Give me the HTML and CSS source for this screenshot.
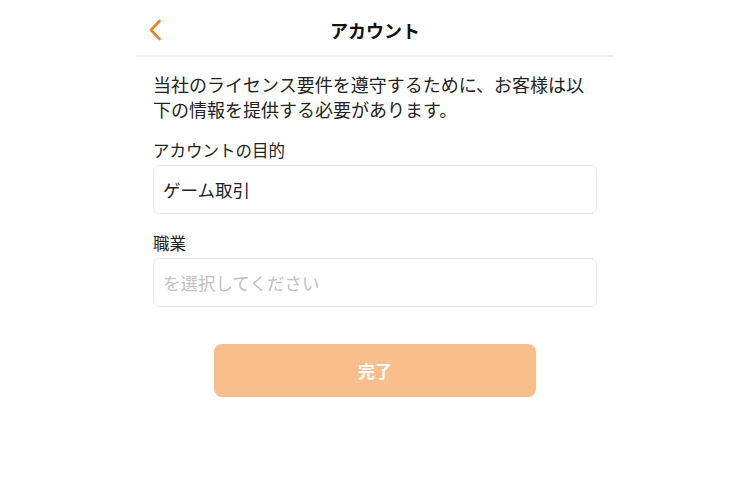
FILE: index.html
```html
<!DOCTYPE html>
<html lang="ja">
<head>
    <meta charset="UTF-8">
    <meta name="viewport" content="width=device-width, initial-scale=1.0">
    <title>アカウント</title>
    <link rel="stylesheet" href="styles.css">
</head>
<body>
    <div id="page">
        <div class="top-bar">
            <a class="back">
                <svg width="14" height="22" viewBox="0 0 14 22">
                    <path d="M11.5 2 L3 11 L11.5 20" fill="none" stroke="#f0832a" stroke-width="2.6" stroke-linecap="round" stroke-linejoin="round"/>
                </svg>
            </a>
            <p class="title">アカウント</p>
        </div>
        <div class="form-body">
            <p class="notice">当社のライセンス要件を遵守するために、お客様は以下の情報を提供する必要があります。</p>
            <div class="field">
                <p class="label">アカウントの目的</p>
                <div class="input">ゲーム取引</div>
            </div>
            <div class="field">
                <p class="label">職業</p>
                <div class="input placeholder">を選択してください</div>
            </div>
            <div class="actions">
                <a class="submit">完了</a>
            </div>
        </div>
    </div>
</body>
</html>
```

FILE: styles.css
```css
*{
    padding: 0;
    margin: 0;
    box-sizing: border-box;
    font-family: "Noto Sans CJK JP", "Noto Sans", sans-serif;
}
body{
    background: white;
    color: #222;
}
a{
    text-decoration: none;
    cursor: pointer;
}
#page{
    width: 478px;
    margin: 0 auto;
}
#page > .top-bar{
    position: relative;
    display: flex;
    align-items: center;
    justify-content: center;
    height: 57px;
    border-bottom: 2px solid #eeeeee;
}
#page > .top-bar > .back{
    position: absolute;
    left: 12px;
    top: 19px;
    display: flex;
}
#page > .top-bar > .title{
    font-size: 18px;
    font-weight: bold;
    color: #111;
    margin-top: 4px;
}
#page > .form-body{
    display: flex;
    flex-direction: column;
    padding: 15px 17px 0;
}
#page > .form-body > .notice{
    font-size: 18px;
    line-height: 25px;
}
#page > .form-body > .field{
    display: flex;
    flex-direction: column;
    gap: 4px;
    margin-top: 17px;
}
#page > .form-body > .field + .field{
    margin-top: 18px;
}
#page > .form-body > .field > .label{
    font-size: 16.5px;
    line-height: 22px;
}
#page > .form-body > .field > .input{
    display: flex;
    align-items: center;
    height: 49px;
    padding: 0 9px;
    border: 1px solid #e8e8e8;
    border-radius: 6px;
    font-size: 17.5px;
}
#page > .form-body > .field > .input.placeholder{
    color: #c2c2c2;
}
#page > .form-body > .actions{
    display: flex;
    justify-content: center;
    margin-top: 37px;
}
#page > .form-body > .actions > .submit{
    display: flex;
    align-items: center;
    justify-content: center;
    width: 322px;
    height: 53px;
    border-radius: 8px;
    background: #f8bf8d;
    color: white;
    font-size: 17px;
    font-weight: bold;
}
```
